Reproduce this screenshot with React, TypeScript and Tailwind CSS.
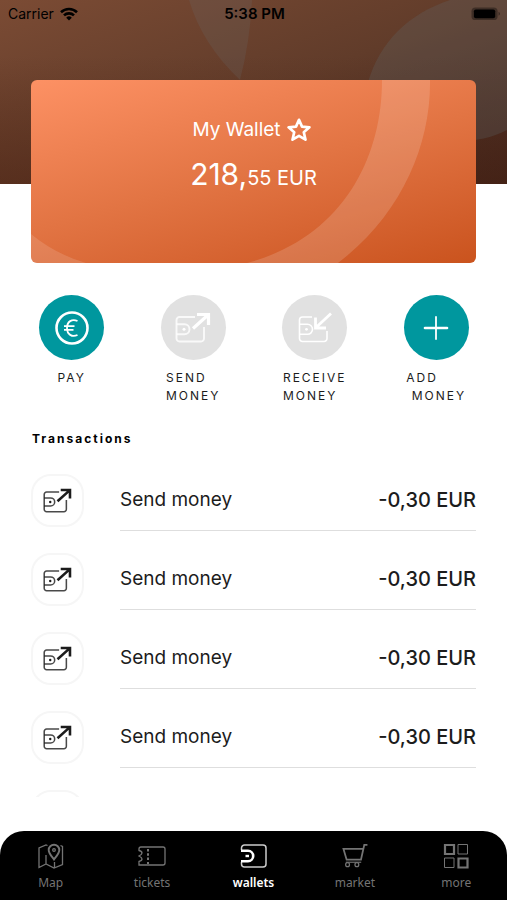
import type { ReactNode } from 'react';

type IconProps = { className?: string };

function SendIcon({ className }: IconProps) {
  return (
    <svg viewBox="0 0 36 31" fill="none" stroke="currentColor" className={className}>
      <g strokeWidth="1.900" strokeOpacity=".8">
        <path d="M20 5H4.500a3 3 0 0 0-3 3v18.500a3 3 0 0 0 3 3H26a3 3 0 0 0 3-3V15" />
        <path d="M1.500 12.300h8a5 5 0 0 1 0 10h-8" />
      </g>
      <circle cx="9" cy="17.300" r="1.500" fill="currentColor" stroke="none" />
      <path d="M18 16.500 33 3M22 2.500h11.500V13" strokeWidth="3.200" />
    </svg>
  );
}

function ReceiveIcon({ className }: IconProps) {
  return (
    <svg viewBox="0 0 34 31" fill="none" stroke="currentColor" className={className}>
      <g strokeWidth="1.600">
        <path d="M14 5H4.500a3 3 0 0 0-3 3v18.500a3 3 0 0 0 3 3H26a3 3 0 0 0 3-3V19" />
        <path d="M1.500 12.300h8a5 5 0 0 1 0 10h-8" />
      </g>
      <circle cx="8.500" cy="17.300" r="1.400" fill="currentColor" stroke="none" />
      <path d="M33 1.500 18 15.500M17.500 5.500V16h10.500" strokeWidth="2.800" />
    </svg>
  );
}

function EuroIcon({ className }: IconProps) {
  return (
    <svg viewBox="0 0 34 34" fill="none" stroke="currentColor" className={className}>
      <circle cx="17" cy="17" r="15.500" strokeWidth="2.600" />
      <path d="M22.500 10C17 7.500 12 10.500 12 17s5 9.500 10.500 7M9 15.200h10.500M9 18.800h9.500" strokeWidth="1.800" />
    </svg>
  );
}

function PlusIcon({ className }: IconProps) {
  return (
    <svg viewBox="0 0 26 26" fill="none" stroke="currentColor" strokeLinecap="round" className={className}>
      <path d="M13 2v22" strokeWidth="1.800" />
      <path d="M2 13h22" strokeWidth="2.600" />
    </svg>
  );
}

function StarIcon({ className }: IconProps) {
  return (
    <svg viewBox="0 0 24 24" fill="none" stroke="currentColor" strokeWidth="2.700" strokeLinejoin="round" className={className}>
      <path d="m12 1.800 3 6.800 7.400.7-5.600 4.900 1.700 7.500L12 17.800l-6.500 3.900 1.700-7.500-5.600-4.900 7.400-.7Z" />
    </svg>
  );
}

function WifiIcon({ className }: IconProps) {
  return (
    <svg viewBox="0 0 18 14" fill="none" stroke="currentColor" strokeWidth="2.600" className={className}>
      <path d="M1 5.200a11.500 11.500 0 0 1 16 0M4 8.400a7.200 7.200 0 0 1 10 0" />
      <path d="M9 13.500 6.200 10.700a4 4 0 0 1 5.600 0Z" fill="currentColor" stroke="none" />
    </svg>
  );
}

function BatteryIcon({ className }: IconProps) {
  return (
    <svg viewBox="0 0 31 14" className={className}>
      <rect x="0.500" y="0.500" width="27" height="13" rx="4" fillOpacity=".35" />
      <rect x="3" y="2.500" width="22" height="9" rx="2" />
      <path d="M28.500 5v4c2-1 2-3 0-4Z" fillOpacity=".4" />
    </svg>
  );
}

function MapIcon({ className }: IconProps) {
  return (
    <svg viewBox="0 0 26 26" fill="none" stroke="currentColor" strokeWidth="1.300" className={className}>
      <path d="M9.500 2.500 8 2 1 5v19.500L8 21l8 4 8.500-3.500V3.500L22.500 2.500M8 12v9M16.500 19v6" />
      <path d="M16 16.500c-2.500-3.500-5.300-6-5.300-9.500a5.300 5.300 0 0 1 10.600 0c0 3.500-2.800 6-5.300 9.500Z" strokeWidth="1.900" />
      <circle cx="16" cy="7" r="1.300" />
    </svg>
  );
}

function TicketIcon({ className }: IconProps) {
  return (
    <svg viewBox="0 0 28 20" fill="none" stroke="currentColor" strokeWidth="1.300" className={className}>
      <path d="M3 1h22a2 2 0 0 1 2 2v14a2 2 0 0 1-2 2H1v-3.500c2-.5 3-1.300 3-2.500s-1-2-3-3c2-1 3-1.800 3-3S3 5 1 4.500V3a2 2 0 0 1 2-2Z" />
      <path d="M10 3v15" strokeWidth="2" strokeDasharray="2.500 1.800" />
    </svg>
  );
}

function WalletIcon({ className }: IconProps) {
  return (
    <svg viewBox="0 0 27 24" fill="none" stroke="currentColor" className={className}>
      <path d="M1.500 6V4a3 3 0 0 1 3-3H23a3 3 0 0 1 3 3v16a3 3 0 0 1-3 3H4.500a3 3 0 0 1-3-3v-2" strokeWidth="1.500" strokeOpacity=".8" />
      <path d="M1 6.800h7a5.200 5.200 0 0 1 0 10.400H1" strokeWidth="2.600" />
      <path d="M5.500 12h3.500" strokeWidth="2.400" />
    </svg>
  );
}

function CartIcon({ className }: IconProps) {
  return (
    <svg viewBox="0 0 27 25" fill="none" stroke="currentColor" strokeWidth="1.800" className={className}>
      <path d="M26.500 1h-3.300l-3.400 15.200H4.800L1.500 5h20.500" />
      <path d="M4 19h16" strokeWidth="1.200" />
      <circle cx="5.800" cy="21.500" r="2" strokeWidth="1.300" />
      <circle cx="15.500" cy="21.500" r="2" strokeWidth="1.300" />
    </svg>
  );
}

function MoreIcon({ className }: IconProps) {
  return (
    <svg viewBox="0 0 26 26" fill="none" stroke="currentColor" className={className}>
      <path d="M2 2h9v9H2ZM15.500 15.500h9v9h-9Z" strokeWidth="2.200" />
      <path d="M15 1.500h9.500V11H15ZM1.500 15H11v9.500H1.500Z" strokeWidth="1" />
    </svg>
  );
}

function RowIcon() {
  return (
    <span className="flex size-[53px] shrink-0 items-center justify-center rounded-[20px] border-2 border-[#f6f6f6]">
      <SendIcon className="w-[29px]" />
    </span>
  );
}

const actions = [
  { label: 'PAY', icon: <EuroIcon className="w-[34px]" />, enabled: true },
  { label: 'SEND\nMONEY', icon: <SendIcon className="w-9" />, enabled: false },
  { label: 'RECEIVE\nMONEY', icon: <ReceiveIcon className="w-[34px]" />, enabled: false },
  { label: 'ADD\n MONEY', icon: <PlusIcon className="w-[26px]" />, enabled: true },
];

const transactions = [
  { id: 1, title: 'Send money', amount: '-0,30 EUR' },
  { id: 2, title: 'Send money', amount: '-0,30 EUR' },
  { id: 3, title: 'Send money', amount: '-0,30 EUR' },
  { id: 4, title: 'Send money', amount: '-0,30 EUR' },
];

const tabs: { label: string; icon: ReactNode; active?: boolean }[] = [
  { label: 'Map', icon: <MapIcon className="h-[26px]" /> },
  { label: 'tickets', icon: <TicketIcon className="h-5" /> },
  { label: 'wallets', icon: <WalletIcon className="h-6" />, active: true },
  { label: 'market', icon: <CartIcon className="h-6" /> },
  { label: 'more', icon: <MoreIcon className="h-[26px]" /> },
];

export default function App() {
  return (
    <div className="flex h-screen flex-col overflow-hidden bg-white font-['Inter',sans-serif] text-[#1c1c1c]">
      {/* Header */}
      <header className="relative h-46 shrink-0 bg-linear-to-br from-[#7b4b34] via-[#613c2a] to-[#40261d]">
        <svg viewBox="0 0 507 184" preserveAspectRatio="none" className="absolute inset-0 h-full w-full" aria-hidden="true">
          <defs>
            <linearGradient id="shade" x1="0" y1="0" x2="0" y2="1">
              <stop offset="0.300" stopColor="#4a1c0c" stopOpacity="0" />
              <stop offset="1" stopColor="#4a1c0c" stopOpacity=".4" />
            </linearGradient>
          </defs>
          <rect width="507" height="184" fill="url(#shade)" />
          <path d="M189 0q13 44 51 80q10-38 12-80Z" fill="#6b727a" fillOpacity=".18" />
          <path d="M450 0C408 14 380 42 368 82c10 42 80 78 139 48V0Z" fill="#5f6b70" fillOpacity=".25" />
        </svg>
        <div className="relative grid grid-cols-3 items-center pt-1 pr-1.5 pl-2 text-sm leading-5 text-black">
          <span className="flex items-center gap-1.5">
            Carrier <WifiIcon className="w-[18px]" />
          </span>
          <span className="text-center text-[15px] leading-5 font-semibold">5:38 PM</span>
          <BatteryIcon className="w-[30px] justify-self-end" />
        </div>
      </header>

      {/* Wallet card */}
      <section className="relative mx-[31px] -mt-26 flex h-[183px] shrink-0 flex-col items-center overflow-hidden rounded-md bg-linear-165 from-[#fd9164] via-[#e27443] to-[#ca531d] pt-9 text-white">
        <svg viewBox="0 0 445 183" preserveAspectRatio="none" className="absolute inset-0 h-full w-full" aria-hidden="true">
          <path d="M351 0C351 80 310 158 216 183H307C370 135 400 65 399 0Z" fill="#fff" fillOpacity=".15" />
          <path d="M0 154Q24 174 55 183H0Z" fill="#fff" fillOpacity=".13" />
        </svg>
        <h1 className="relative flex items-center gap-1.5 pr-1 text-[19px] leading-7">
          My Wallet <StarIcon className="w-6" />
        </h1>
        <p className="relative mt-3 text-xl leading-9">
          <span className="text-3xl leading-9">218,</span>55 EUR
        </p>
      </section>

      {/* Actions */}
      <div className="mt-8 grid shrink-0 grid-cols-4 pr-2.5 pl-[11px]">
        {actions.map((action) => (
          <button key={action.label} disabled={!action.enabled} className="flex flex-col items-center gap-[9px]">
            <span
              className={`flex size-[65px] items-center justify-center rounded-full text-white ${
                action.enabled ? 'bg-[#00979e]' : 'bg-[#e1e1e1]'
              }`}
            >
              {action.icon}
            </span>
            <span className="text-left text-xs leading-[18px] tracking-[2px] whitespace-pre">{action.label}</span>
          </button>
        ))}
      </div>

      {/* Transactions */}
      <h2 className="mt-6 shrink-0 px-8 text-xs leading-5 font-bold tracking-[2px] text-black">Transactions</h2>
      <ul className="mt-[25px] mb-[34px] min-h-0 flex-1 overflow-hidden px-[31px]">
        {transactions.map((item) => (
          <li key={item.id} className="flex h-[79px] items-start gap-9">
            <RowIcon />
            <span className="flex h-[57px] flex-1 items-center justify-between border-b border-[#dedede] pb-1 text-[19px]">
              <span>{item.title}</span>
              <span className="text-xl font-medium">{item.amount}</span>
            </span>
          </li>
        ))}
        {/* top edge of the next row, hints at more below */}
        <li className="flex" aria-hidden="true">
          <RowIcon />
        </li>
      </ul>

      {/* Tab bar */}
      <nav className="grid shrink-0 grid-cols-5 rounded-t-3xl bg-black pt-[11px] pb-2 font-['Noto_Sans',sans-serif]">
        {tabs.map((tab) => (
          <a
            key={tab.label}
            href={`#${tab.label}`}
            className={`flex flex-col items-center gap-1 text-xs leading-[18px] ${
              tab.active ? 'font-semibold text-white' : 'text-[#747474]'
            }`}
          >
            <span className="flex h-7 items-center">{tab.icon}</span>
            {tab.label}
          </a>
        ))}
      </nav>
    </div>
  );
}
